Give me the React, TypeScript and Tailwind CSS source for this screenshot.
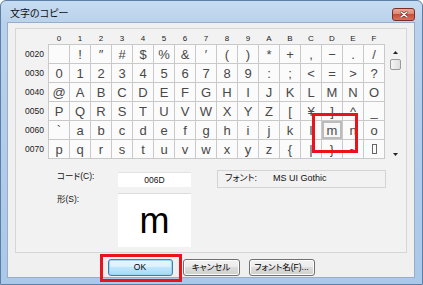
import clsx from 'clsx';

const COLS = ['0', '1', '2', '3', '4', '5', '6', '7', '8', '9', 'A', 'B', 'C', 'D', 'E', 'F'];

const ROWS: { label: string; chars: string[] }[] = [
  { label: '0020', chars: ['', '!', '″', '#', '$', '%', '&', '′', '(', ')', '*', '+', ',', '−', '.', '/'] },
  { label: '0030', chars: '0123456789:;<=>?'.split('') },
  { label: '0040', chars: '@ABCDEFGHIJKLMNO'.split('') },
  { label: '0050', chars: 'PQRSTUVWXYZ[¥]^_'.split('') },
  { label: '0060', chars: '`abcdefghijklmno'.split('') },
  { label: '0070', chars: [...'pqrstuvwxyz{|}~'.split(''), 'DEL'] },
];

const SELECTED = 'm';

const JP = "font-['Liberation_Sans','Noto_Sans_CJK_JP',sans-serif] [font-feature-settings:'palt']";

function Cell({ ch }: { ch: string }) {
  const selected = ch === SELECTED;
  return (
    <div className="bg-[#fbfbfb] flex items-center justify-center text-[13px] leading-none text-[#484848]">
      {ch === 'DEL' ? (
        <span className="w-[5px] h-[10px] border border-[#666]" />
      ) : selected ? (
        <span className="w-full h-full flex items-center justify-center bg-[#f7f7f7] shadow-[inset_0_0_0_2px_#bcbcbc]">
          {ch}
        </span>
      ) : (
        ch
      )}
    </div>
  );
}

function Button({ children, className, primary }: { children: React.ReactNode; className: string; primary?: boolean }) {
  return (
    <div
      className={clsx(
        'h-[17px] flex items-center justify-center rounded-[3px] border text-[8.5px] text-black',
        JP,
        primary
          ? 'border-[#3c7fb1] bg-[linear-gradient(#eaf6fd,#d9f0fc_50%,#bee6fd_50%,#a7d9f5)] shadow-[inset_0_0_0_1px_#9ed3f2]'
          : 'border-[#707070] bg-[linear-gradient(#f2f2f2,#ebebeb_50%,#dddddd_50%,#cfcfcf)] shadow-[inset_0_0_0_1px_#fcfcfc]',
        className,
      )}
    >
      {children}
    </div>
  );
}

function Tri({ down }: { down?: boolean }) {
  return (
    <svg width="5" height="3" viewBox="0 0 5 3">
      <path d={down ? 'M0 0H5L2.5 3Z' : 'M0 3H5L2.5 0Z'} fill="#222" />
    </svg>
  );
}

export default function App() {
  return (
    <div className="relative w-[423px] h-[285px] flex flex-col rounded-t-[6px] border border-[#5d7fa6] bg-[linear-gradient(#c7dcf2,#b9d1eb_22px,#aac8e8)] overflow-hidden">
      {/* title bar */}
      <div className="h-[21px] flex items-center justify-between pl-[9px] pr-[7px] pt-[5px]">
        <span className={clsx('text-[10px] leading-none text-[#111]', JP)}>文字のコピー</span>
        <div className="w-[23px] h-[13px] rounded-[3px] border border-[#7a2e25] bg-[linear-gradient(#eba898,#d98270_50%,#c54f37_50%,#d4735d)] flex items-center justify-center">
          <svg width="8" height="7" viewBox="0 0 8 7">
            <path d="M1 1L7 6M7 1L1 6" stroke="#5a1a12" strokeWidth="2.6" strokeLinecap="round" />
            <path d="M1 1L7 6M7 1L1 6" stroke="#fff" strokeWidth="1.6" strokeLinecap="round" />
          </svg>
        </div>
      </div>

      {/* client area */}
      <div className="flex-1 ml-[6px] mr-[7px] mb-[6px] border border-[#97adc9] bg-[#f0f0f0] flex flex-col">
        <div className="mx-[7px] mt-[5px] h-[225px] border border-[#d6d6d6] bg-[#f2f2f2] flex flex-col">
          {/* column header */}
          <div className="ml-[32px] h-[15px] pt-[4px] px-px grid grid-cols-[repeat(16,20px)] gap-x-px">
            {COLS.map((c) => (
              <div key={c} className="text-center text-[8px] leading-[11px] text-[#1a1a1a] font-['Liberation_Sans',sans-serif]">
                {c}
              </div>
            ))}
          </div>

          <div className="flex">
            {/* row labels */}
            <div className="w-[32px] pl-[9px] pt-px flex flex-col gap-px">
              {ROWS.map((r) => (
                <div key={r.label} className="h-[18px] flex items-center text-[8.5px] text-[#1a1a1a] font-['Liberation_Sans',sans-serif]">
                  {r.label}
                </div>
              ))}
            </div>

            {/* character grid */}
            <div className="bg-[#c9c9c9] p-px grid grid-cols-[repeat(16,20px)] auto-rows-[18px] gap-px font-['Liberation_Sans',sans-serif]">
              {ROWS.flatMap((r) => r.chars.map((ch, i) => <Cell key={r.label + i} ch={ch} />))}
            </div>

            {/* scrollbar */}
            <div className="ml-[3px] w-[14px] h-[115px] flex flex-col items-center">
              <div className="h-[13px] pt-[7px]">
                <Tri />
              </div>
              <div className="mt-[2px] w-[11px] h-[11px] rounded-[2px] border border-[#9a9a9a] bg-[linear-gradient(90deg,#f5f5f5,#dedede)]" />
              <div className="flex-1" />
              <div className="h-[6px]">
                <Tri down />
              </div>
            </div>
          </div>

          {/* bottom: code / shape / font */}
          <div className={clsx('flex mt-[11px] pl-[41px] text-[8.5px] text-[#111]', JP)}>
            <div className="w-[61px] flex flex-col">
              <span className="mt-[1px] leading-[10px]">コード(C):</span>
              <span className="mt-[13px] leading-[10px]">形(S):</span>
            </div>
            <div className="w-[73px] flex flex-col">
              <div className="mt-[2px] h-[15px] bg-white border-t border-[#e2e2e2] flex items-center justify-center font-['Liberation_Sans',sans-serif]">
                006D
              </div>
              <div className="mt-[6px] h-[54px] bg-white border-t border-[#dcdcdc] flex items-center justify-center text-[36px] leading-none text-black font-['Liberation_Sans',sans-serif]">
                m
              </div>
            </div>
            <div className="ml-[26px] w-[169px] h-[18px] border border-[#d4d4d4] flex items-center pl-[7px] text-[9px]">
              <span className="w-[48px]">フォント:</span>
              <span className="font-['Liberation_Sans',sans-serif]">MS UI Gothic</span>
            </div>
          </div>
        </div>

        {/* buttons */}
        <div className="mt-[6px] flex justify-center gap-[9px]">
          <Button primary className="w-[65px] mr-px">OK</Button>
          <Button className="w-[57px]">キャンセル</Button>
          <Button className="w-[66px]">フォント名(F)...</Button>
        </div>
      </div>

      {/* red annotation marks */}
      <div className="absolute left-[311px] top-[112px] w-[46px] h-[40px] border-[3px] border-[#e8141b]" />
      <div className="absolute left-[99px] top-[253px] w-[82px] h-[28px] border-[3px] border-[#e8141b]" />
    </div>
  );
}
